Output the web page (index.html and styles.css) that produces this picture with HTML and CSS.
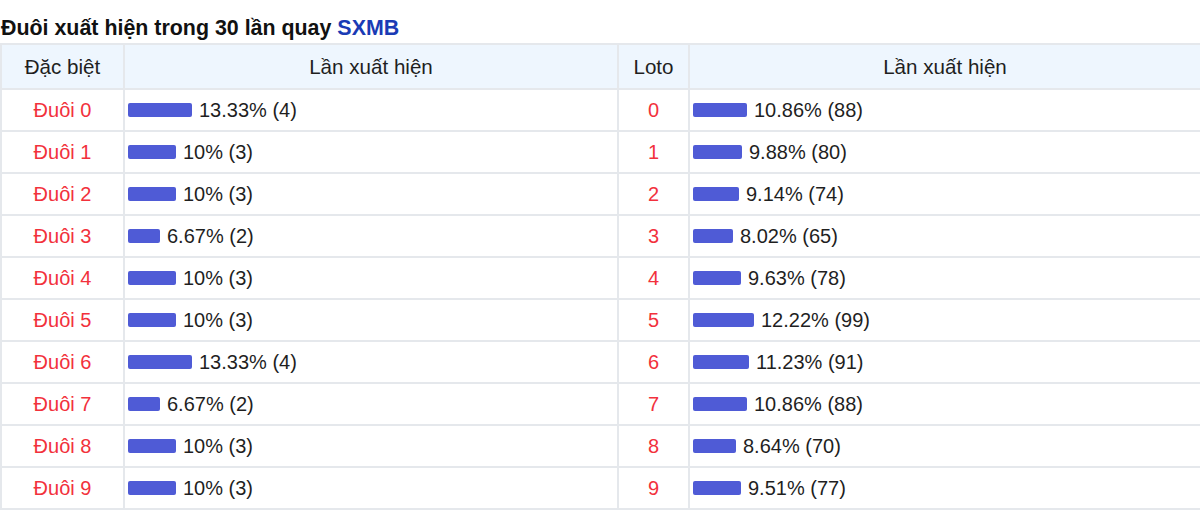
FILE: index.html
```html
<!DOCTYPE html>
<html lang="vi">
<head>
<meta charset="utf-8">
<link rel="stylesheet" href="styles.css">
</head>
<body>
<h2 class="title">Đuôi xuất hiện trong 30 lần quay <span class="brand">SXMB</span></h2>
<table class="stats">
  <colgroup>
    <col class="c1"><col class="c2"><col class="c3"><col class="c4">
  </colgroup>
  <thead>
    <tr><th>Đặc biệt</th><th>Lần xuất hiện</th><th>Loto</th><th>Lần xuất hiện</th></tr>
  </thead>
  <tbody>
    <tr><td class="num">Đuôi 0</td><td><div class="cell"><span class="bar" style="width:64px"></span>13.33% (4)</div></td><td class="num">0</td><td><div class="cell"><span class="bar" style="width:54px"></span>10.86% (88)</div></td></tr>
    <tr><td class="num">Đuôi 1</td><td><div class="cell"><span class="bar" style="width:48px"></span>10% (3)</div></td><td class="num">1</td><td><div class="cell"><span class="bar" style="width:49px"></span>9.88% (80)</div></td></tr>
    <tr><td class="num">Đuôi 2</td><td><div class="cell"><span class="bar" style="width:48px"></span>10% (3)</div></td><td class="num">2</td><td><div class="cell"><span class="bar" style="width:46px"></span>9.14% (74)</div></td></tr>
    <tr><td class="num">Đuôi 3</td><td><div class="cell"><span class="bar" style="width:32px"></span>6.67% (2)</div></td><td class="num">3</td><td><div class="cell"><span class="bar" style="width:40px"></span>8.02% (65)</div></td></tr>
    <tr><td class="num">Đuôi 4</td><td><div class="cell"><span class="bar" style="width:48px"></span>10% (3)</div></td><td class="num">4</td><td><div class="cell"><span class="bar" style="width:48px"></span>9.63% (78)</div></td></tr>
    <tr><td class="num">Đuôi 5</td><td><div class="cell"><span class="bar" style="width:48px"></span>10% (3)</div></td><td class="num">5</td><td><div class="cell"><span class="bar" style="width:61px"></span>12.22% (99)</div></td></tr>
    <tr><td class="num">Đuôi 6</td><td><div class="cell"><span class="bar" style="width:64px"></span>13.33% (4)</div></td><td class="num">6</td><td><div class="cell"><span class="bar" style="width:56px"></span>11.23% (91)</div></td></tr>
    <tr><td class="num">Đuôi 7</td><td><div class="cell"><span class="bar" style="width:32px"></span>6.67% (2)</div></td><td class="num">7</td><td><div class="cell"><span class="bar" style="width:54px"></span>10.86% (88)</div></td></tr>
    <tr><td class="num">Đuôi 8</td><td><div class="cell"><span class="bar" style="width:48px"></span>10% (3)</div></td><td class="num">8</td><td><div class="cell"><span class="bar" style="width:43px"></span>8.64% (70)</div></td></tr>
    <tr><td class="num">Đuôi 9</td><td><div class="cell"><span class="bar" style="width:48px"></span>10% (3)</div></td><td class="num">9</td><td><div class="cell"><span class="bar" style="width:48px"></span>9.51% (77)</div></td></tr>
  </tbody>
</table>
</body>
</html>
```
FILE: styles.css
```css
html, body {
  margin: 0;
  padding: 0;
  background: #fff;
}
body {
  font-family: "Liberation Sans", Arial, sans-serif;
  color: #1f1f1f;
}
.title {
  margin: 0;
  padding: 14px 0 0 1px;
  height: 43px;
  box-sizing: border-box;
  font-size: 21.4px;
  line-height: 28px;
  font-weight: bold;
  color: #111;
}
.brand {
  color: #1a3bb5;
}
.stats {
  width: 1200px;
  border-collapse: collapse;
  table-layout: fixed;
  font-size: 20px;
}
.c1 { width: 123px; }
.c2 { width: 494px; }
.c3 { width: 71px; }
.c4 { width: 512px; }
.stats th,
.stats td {
  border: 2px solid #e5e8ec;
  padding: 0 3px;
}
.stats th {
  height: 43px;
  background: #eef6fe;
  font-size: 20.6px;
  font-weight: normal;
  color: #1f1f1f;
  text-align: center;
}
.stats td {
  height: 40px;
}
.stats td.num {
  text-align: center;
  color: #f2313c;
}
.cell {
  display: flex;
  align-items: center;
  gap: 7px;
}
.bar {
  display: inline-block;
  height: 14px;
  background: #4f5bd6;
  border-radius: 2px;
}
```
